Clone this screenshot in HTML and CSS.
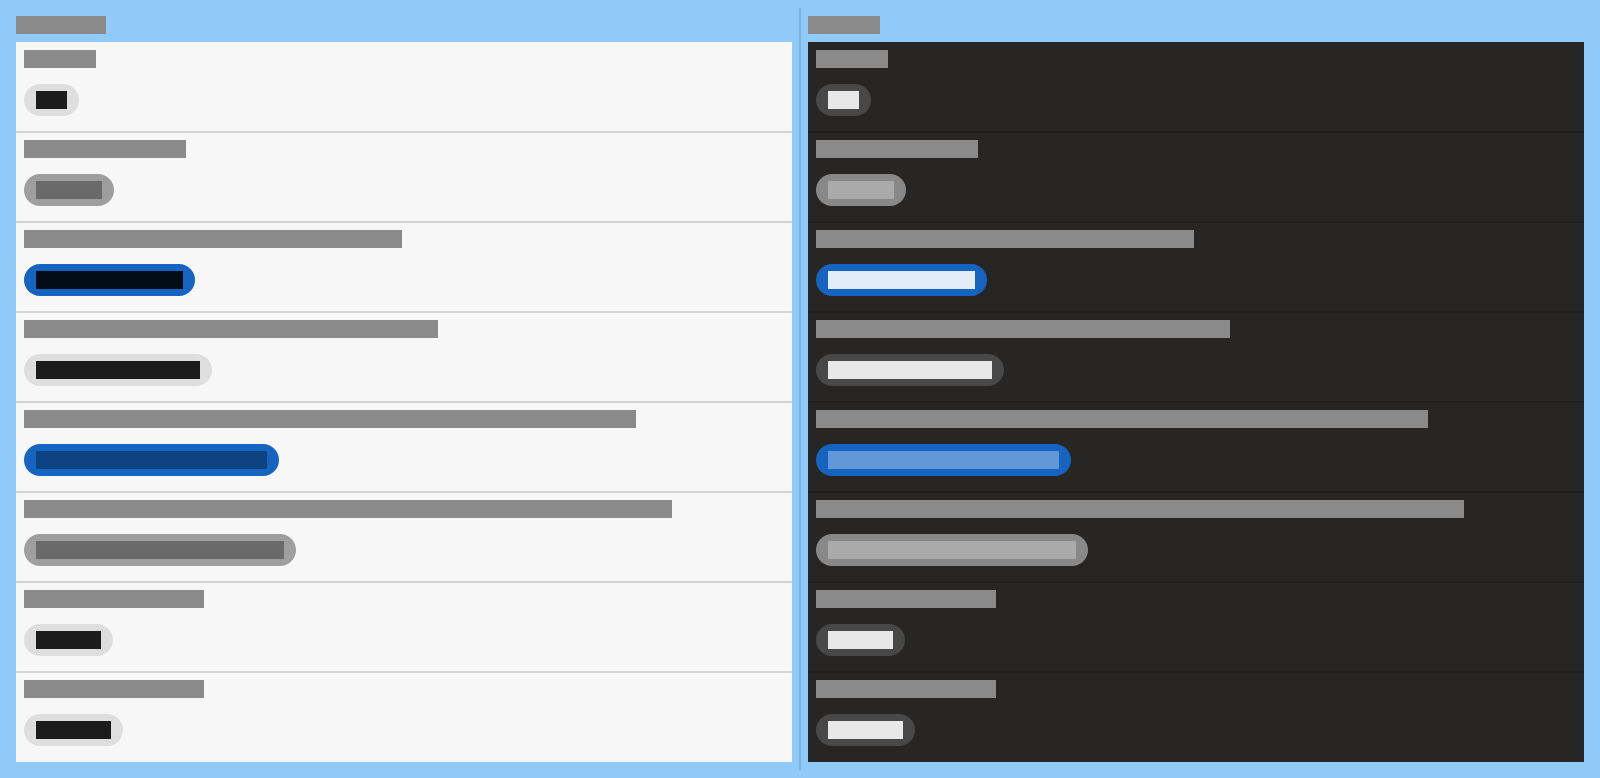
FILE: index.html
```html
<!DOCTYPE html>
<html lang="en">
<head>
<meta charset="utf-8">
<title>Chip variants</title>
<link rel="stylesheet" href="styles.css">
</head>
<body>
<main class="board">
  <section class="col col-light">
    <div class="title title-light"></div>
    <div class="panel panel-light">
      <div class="row"><div class="label w72"></div><div class="chip chip-default"><span class="txt t31"></span></div></div>
      <div class="row"><div class="label w162"></div><div class="chip chip-disabled"><span class="txt t66"></span></div></div>
      <div class="row"><div class="label w378"></div><div class="chip chip-primary"><span class="txt t147"></span></div></div>
      <div class="row"><div class="label w414"></div><div class="chip chip-default"><span class="txt t164"></span></div></div>
      <div class="row"><div class="label w612"></div><div class="chip chip-primary chip-muted"><span class="txt t231"></span></div></div>
      <div class="row"><div class="label w648"></div><div class="chip chip-disabled"><span class="txt t248"></span></div></div>
      <div class="row"><div class="label w180"></div><div class="chip chip-default"><span class="txt t65"></span></div></div>
      <div class="row"><div class="label w180"></div><div class="chip chip-default"><span class="txt t75"></span></div></div>
    </div>
  </section>
  <div class="divider"></div>
  <section class="col col-dark">
    <div class="title title-dark"></div>
    <div class="panel panel-dark">
      <div class="row"><div class="label w72"></div><div class="chip chip-default"><span class="txt t31"></span></div></div>
      <div class="row"><div class="label w162"></div><div class="chip chip-disabled"><span class="txt t66"></span></div></div>
      <div class="row"><div class="label w378"></div><div class="chip chip-primary"><span class="txt t147"></span></div></div>
      <div class="row"><div class="label w414"></div><div class="chip chip-default"><span class="txt t164"></span></div></div>
      <div class="row"><div class="label w612"></div><div class="chip chip-primary chip-muted"><span class="txt t231"></span></div></div>
      <div class="row"><div class="label w648"></div><div class="chip chip-disabled"><span class="txt t248"></span></div></div>
      <div class="row"><div class="label w180"></div><div class="chip chip-default"><span class="txt t65"></span></div></div>
      <div class="row"><div class="label w180"></div><div class="chip chip-default"><span class="txt t75"></span></div></div>
    </div>
  </section>
</main>
</body>
</html>
```
FILE: styles.css
```css
html, body {
  margin: 0;
  padding: 0;
}
body {
  background: #90caf9;
  font-family: "Liberation Sans", Arial, sans-serif;
  padding: 8px;
  box-sizing: border-box;
  width: 1600px;
  height: 778px;
}
.board {
  display: flex;
  height: 762px;
}
.col {
  width: 776px;
  display: flex;
  flex-direction: column;
  gap: 8px;
  padding-top: 8px;
  padding-bottom: 8px;
}
.col-light {
  padding-left: 8px;
  padding-right: 7px;
}
.col-dark {
  padding-left: 7px;
  padding-right: 8px;
}
.divider {
  width: 2px;
  background: #7db4e3;
}
.title {
  height: 18px;
  background: #8a8a8a;
}
.title-light { width: 90px; }
.title-dark { width: 72px; }

.panel {
  display: flex;
  flex-direction: column;
}
.panel-light { background: #f7f7f7; }
.panel-dark { background: #272625; }

.row {
  display: flex;
  flex-direction: column;
  align-items: flex-start;
  gap: 16px;
  padding: 8px 8px 16px;
}
.row + .row {
  margin-top: -1px;
  padding-top: 7px;
  border-top: 2px solid #d3d3d3;
}
.panel-dark .row + .row {
  border-top-color: #201f1e;
}
.label {
  height: 18px;
  background: #8a8a8a;
}
.w72 { width: 72px; }
.w162 { width: 162px; }
.w180 { width: 180px; }
.w378 { width: 378px; }
.w414 { width: 414px; }
.w612 { width: 612px; }
.w648 { width: 648px; }

.chip {
  display: flex;
  align-items: center;
  height: 32px;
  box-sizing: border-box;
  padding: 0 12px;
  border-radius: 16px;
}
.txt {
  display: block;
  height: 18px;
}
.t31 { width: 31px; }
.t65 { width: 65px; }
.t66 { width: 66px; }
.t75 { width: 75px; }
.t147 { width: 147px; }
.t164 { width: 164px; }
.t231 { width: 231px; }
.t248 { width: 248px; }

/* light theme */
.panel-light .chip-default { background: #dedede; }
.panel-light .chip-default .txt { background: #1c1c1c; }
.panel-light .chip-disabled { background: #9e9e9e; }
.panel-light .chip-disabled .txt { background: #6a6a6a; }
.panel-light .chip-primary { background: #1565c0; }
.panel-light .chip-primary .txt { background: #030d18; }
.panel-light .chip-muted .txt { background: #0f4280; }

/* dark theme */
.panel-dark .chip-default { background: #484848; }
.panel-dark .chip-default .txt { background: #e8e8e8; }
.panel-dark .chip-disabled { background: #888888; }
.panel-dark .chip-disabled .txt { background: #aaaaaa; }
.panel-dark .chip-primary { background: #1565c0; }
.panel-dark .chip-primary .txt { background: #e3edf9; }
.panel-dark .chip-muted .txt { background: #6398d8; }
```
